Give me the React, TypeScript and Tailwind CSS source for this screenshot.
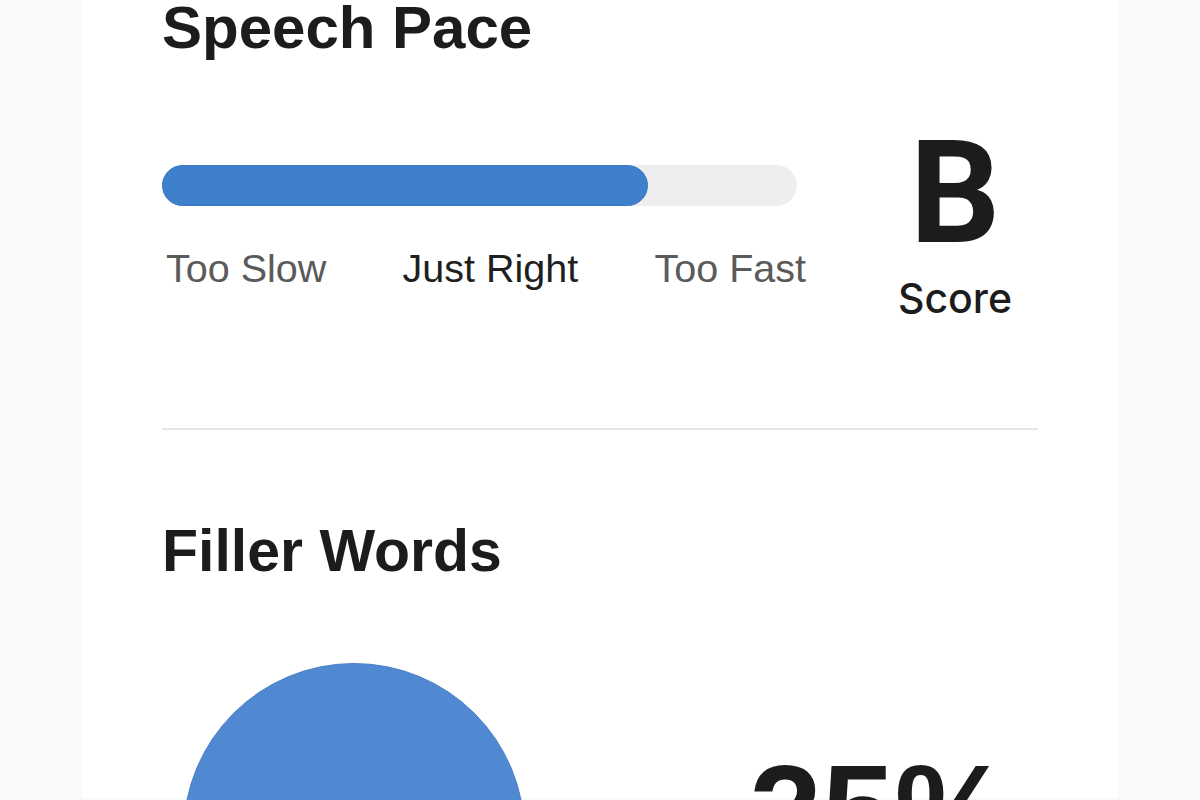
import React from 'react';

// Speech analysis card: pace bar with grade, then filler-word share
const PACE = 0.765; // fraction of the track that is filled

export default function App() {
  return (
    <div
      className="h-screen overflow-hidden bg-[#f9f9f8] text-[#1c1c1c]"
      style={{ fontFamily: '"Liberation Sans", Arial, sans-serif' }}
    >
      <div className="mx-[82px] h-full bg-white px-[80px]">
        {/* Speech Pace */}
        <h2 className="-mt-[2px] text-[60px] font-bold leading-none">Speech Pace</h2>

        <div className="mt-[57px] flex">
          <div className="w-[644px] pt-[50px]">
            <div className="h-[41px] w-[635px] rounded-full bg-[#eeeeee]">
              <div
                className="h-full rounded-full border border-[#3a78c2] bg-[#3f80cc]"
                style={{ width: `${PACE * 100}%` }}
              />
            </div>
            <div className="mt-[43px] flex justify-between pl-[4px] text-[39.5px] leading-none">
              <span className="text-[#5a5a5a]">Too Slow</span>
              <span className="text-[#1f1f1f]">Just Right</span>
              <span className="text-[#5a5a5a]">Too Fast</span>
            </div>
          </div>
          <div className="ml-auto flex w-[166px] flex-col items-center">
            <span className="h-[154px] font-['Roboto',sans-serif] text-[142px] font-bold leading-[158px]">B</span>
            <span className="mt-[9px] font-['Inter',sans-serif] text-[41px] font-medium leading-none">Score</span>
          </div>
        </div>

        <div className="mt-[109px] h-[2px] bg-[#e6e6e6]" />

        {/* Filler Words */}
        <h2 className="mt-[92px] text-[59px] font-bold leading-none">Filler Words</h2>

        <div className="mt-[82px] flex items-start">
          <div className="ml-[21px] h-[342px] w-[342px] shrink-0 rounded-full border border-[#4a80c6] bg-[#5089d2]" />
          <span className="ml-[224px] mt-[83px] text-[131px] font-bold leading-none">25%</span>
        </div>
      </div>
    </div>
  );
}
